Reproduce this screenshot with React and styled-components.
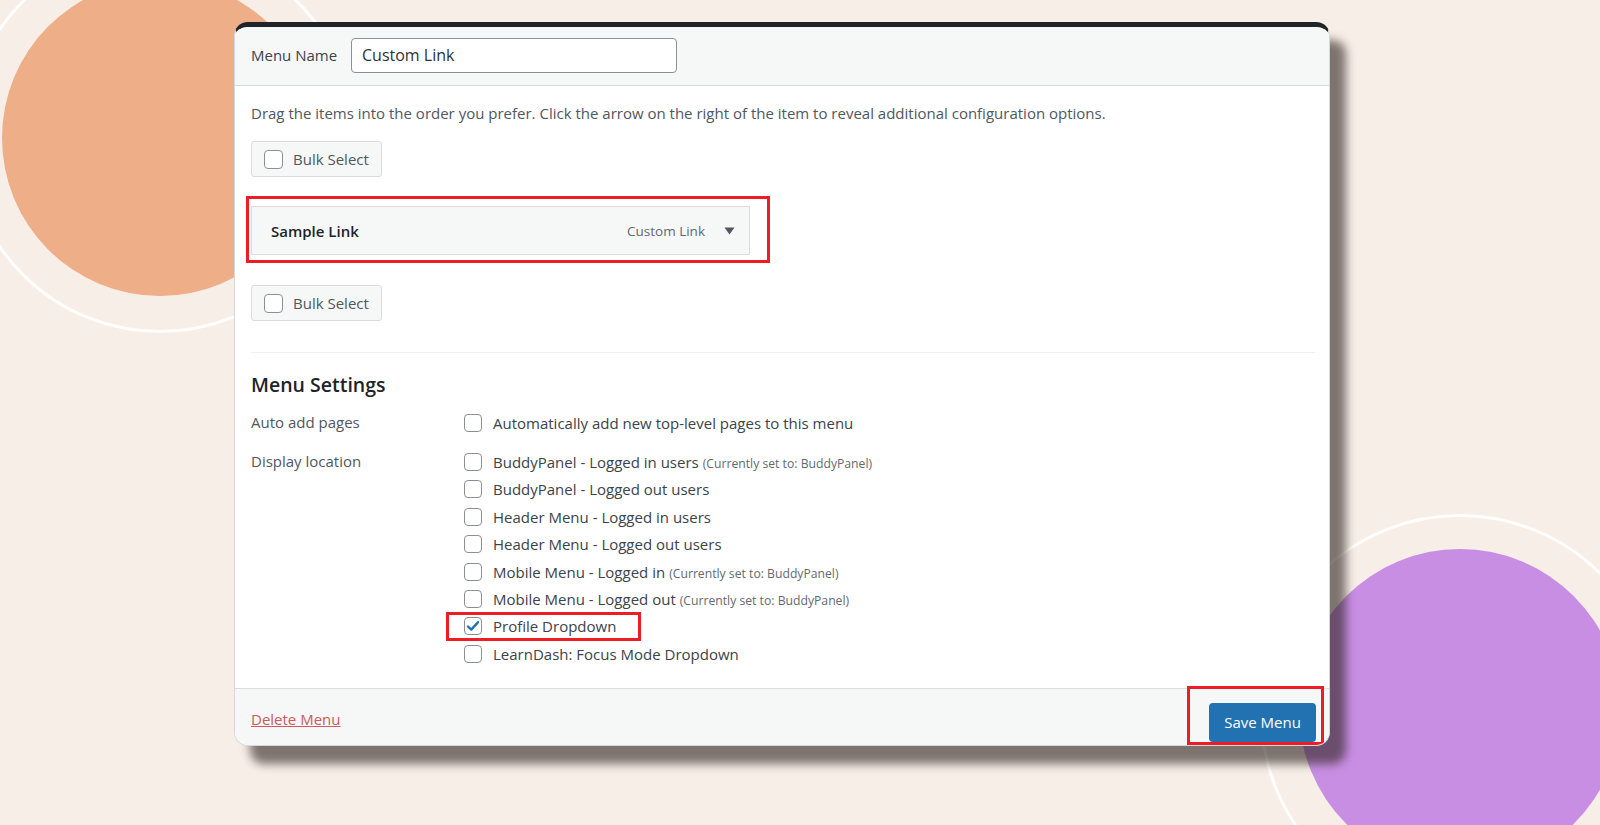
import React from 'react'
import styled, { createGlobalStyle } from 'styled-components'

const GlobalStyle = createGlobalStyle`
  html, body {
    margin: 0;
    padding: 0;
    background: #f7eee8;
  }
  body {
    font-family: "Open Sans", "Noto Sans", sans-serif;
  }
`

const Stage = styled.div`
  position: relative;
  width: 1600px;
  height: 825px;
  overflow: hidden;
  background: #f7eee8;
  padding: 22px 0 0 234px;
  box-sizing: border-box;
`

const Blob = styled.div`
  position: absolute;
  left: ${p => p.x - p.r}px;
  top: ${p => p.y - p.r}px;
  width: ${p => p.r * 2}px;
  height: ${p => p.r * 2}px;
  border-radius: 50%;
  background: ${p => p.color};
`

const Ring = styled.div`
  position: absolute;
  left: ${p => p.x - p.r}px;
  top: ${p => p.y - p.r}px;
  width: ${p => p.r * 2}px;
  height: ${p => p.r * 2}px;
  border-radius: 50%;
  border: 3px solid rgba(255, 255, 255, 0.9);
  box-sizing: border-box;
`

const Window = styled.div`
  position: relative;
  z-index: 1;
  width: 1096px;
  height: 724px;
  box-sizing: border-box;
  display: flex;
  flex-direction: column;
  background: #fff;
  border: 1.5px solid #d6d7d8;
  border-top: 5px solid #1f2428;
  border-radius: 14px;
  overflow: hidden;
  box-shadow: 16px 18px 10px rgba(45, 35, 30, 0.6);
`

const Header = styled.div`
  height: 59px;
  flex: none;
  box-sizing: border-box;
  display: flex;
  align-items: center;
  gap: 16px;
  padding: 0 16px 2px;
  background: #f6f7f7;
  border-bottom: 1px solid #dcdcde;
`

const Label = styled.span`
  flex: none;
  white-space: nowrap;
  font-size: 15px;
  color: #3c434a;
  width: 84px;
`

const NameInput = styled.div`
  width: 326px;
  height: 35px;
  box-sizing: border-box;
  display: flex;
  align-items: center;
  padding: 0 10px;
  background: #fff;
  border: 1px solid #8c8f94;
  border-radius: 4px;
  font-size: 16px;
  color: #2c3338;
`

const Body = styled.div`
  flex: 1;
  display: flex;
  flex-direction: column;
  padding: 16px 14px 0 16px;
`

const Description = styled.p`
  margin: 0;
  font-size: 15px;
  line-height: 22px;
  color: #50575e;
`

const BulkButton = styled.div`
  align-self: flex-start;
  display: flex;
  align-items: center;
  gap: 10px;
  height: 36px;
  box-sizing: border-box;
  padding: 0 12px;
  margin-top: ${p => p.top}px;
  background: #f6f7f7;
  border: 1px solid #dcdcde;
  border-radius: 3px;
  font-size: 15px;
  color: #50575e;
`

const Box = styled.span`
  width: ${p => p.size || 18}px;
  height: ${p => p.size || 18}px;
  box-sizing: border-box;
  flex: none;
  display: flex;
  align-items: center;
  justify-content: center;
  background: #fff;
  border: 1px solid #8c8f94;
  border-radius: 4px;
`

const Highlight = styled.div`
  position: absolute;
  left: ${p => p.l}px;
  top: ${p => p.t}px;
  right: ${p => p.r}px;
  bottom: ${p => p.b}px;
  border: 3px solid #ee1c25;
  pointer-events: none;
`

const ItemWrap = styled.div`
  position: relative;
  width: 499px;
  margin-top: 29px;
`

const MenuItem = styled.div`
  height: 49px;
  box-sizing: border-box;
  display: flex;
  align-items: center;
  padding: 0 14px 0 19px;
  background: #f6f7f7;
  border: 1px solid #dcdcde;
`

const ItemTitle = styled.span`
  flex: 1;
  font-size: 15px;
  font-weight: 600;
  color: #1d2327;
`

const ItemType = styled.span`
  font-size: 13.5px;
  color: #646970;
  margin-right: 19px;
`

const Divider = styled.div`
  height: 1px;
  background: #f0f0f1;
  margin-top: 31px;
`

const Heading = styled.h3`
  margin: 19px 0 0;
  font-size: 19.5px;
  line-height: 26px;
  font-weight: 600;
  color: #1d2327;
`

const SettingRow = styled.div`
  display: grid;
  grid-template-columns: 213px 1fr;
  margin-top: ${p => p.top}px;
`

const SettingLabel = styled.div`
  font-size: 15px;
  line-height: 27.4px;
  color: #50575e;
`

const OptionList = styled.div`
  display: flex;
  flex-direction: column;
`

const Option = styled.div`
  position: relative;
  align-self: flex-start;
  display: flex;
  align-items: center;
  gap: 11px;
  height: 27.4px;
  font-size: 15px;
  color: #3c434a;
`

const Note = styled.span`
  font-size: 12.2px;
  color: #646970;
  margin-left: 4px;
`

const Footer = styled.div`
  height: 57px;
  flex: none;
  box-sizing: border-box;
  display: flex;
  align-items: center;
  justify-content: space-between;
  padding: 0 13px 0 16px;
  background: #f6f7f7;
  border-top: 1px solid #dcdcde;
`

const DeleteLink = styled.a`
  font-size: 15px;
  color: #cc5a5e;
  text-decoration: underline;
  margin-top: 3px;
`

const SaveWrap = styled.div`
  position: relative;
  margin-top: 10px;
`

const SaveButton = styled.div`
  height: 39px;
  width: 107px;
  box-sizing: border-box;
  display: flex;
  align-items: center;
  justify-content: center;
  background: #2271b1;
  border-radius: 4px;
  font-size: 15px;
  color: #fff;
`

const Arrow = () => (
  <svg width="11" height="8" viewBox="0 0 11 8">
    <path d="M0.5 0.5 H10.5 L5.5 7.5 Z" fill="#50575e" />
  </svg>
)

const Check = () => (
  <svg width="14" height="12" viewBox="0 0 14 12">
    <path d="M2 6.5 L5.3 9.6 L12 2.2" fill="none" stroke="#2271b1" strokeWidth="2.4" strokeLinecap="round" strokeLinejoin="round" />
  </svg>
)

const locations = [
  { label: 'BuddyPanel - Logged in users', note: '(Currently set to: BuddyPanel)' },
  { label: 'BuddyPanel - Logged out users' },
  { label: 'Header Menu - Logged in users' },
  { label: 'Header Menu - Logged out users' },
  { label: 'Mobile Menu - Logged in', note: '(Currently set to: BuddyPanel)' },
  { label: 'Mobile Menu - Logged out', note: '(Currently set to: BuddyPanel)' },
  { label: 'Profile Dropdown', checked: true, marked: true },
  { label: 'LearnDash: Focus Mode Dropdown' }
]

export default function App () {
  return (
    <>
      <GlobalStyle />
      <Stage>
        <Blob x={160} y={138} r={158} color="#eeae88" />
        <Ring x={160} y={138} r={195} />
        <Blob x={1460} y={710} r={161} color="#c88ee3" />
        <Ring x={1460} y={714} r={200} />

        <Window>
          <Header>
            <Label>Menu Name</Label>
            <NameInput>Custom Link</NameInput>
          </Header>

          <Body>
            <Description>
              Drag the items into the order you prefer. Click the arrow on the right of the item to reveal additional configuration options.
            </Description>

            <BulkButton top={17}>
              <Box size={19} />
              Bulk Select
            </BulkButton>

            <ItemWrap>
              <MenuItem>
                <ItemTitle>Sample Link</ItemTitle>
                <ItemType>Custom Link</ItemType>
                <Arrow />
              </MenuItem>
              <Highlight l={-5} t={-10} r={-20} b={-8} />
            </ItemWrap>

            <BulkButton top={30}>
              <Box size={19} />
              Bulk Select
            </BulkButton>

            <Divider />

            <Heading>Menu Settings</Heading>

            <SettingRow top={11}>
              <SettingLabel>Auto add pages</SettingLabel>
              <OptionList>
                <Option>
                  <Box />
                  Automatically add new top-level pages to this menu
                </Option>
              </OptionList>
            </SettingRow>

            <SettingRow top={12}>
              <SettingLabel>Display location</SettingLabel>
              <OptionList>
                {locations.map(loc => (
                  <Option key={loc.label}>
                    <Box>{loc.checked && <Check />}</Box>
                    <span>
                      {loc.label}
                      {loc.note && <Note>{loc.note}</Note>}
                    </span>
                    {loc.marked && <Highlight l={-18} t={-1} r={-25} b={-1} />}
                  </Option>
                ))}
              </OptionList>
            </SettingRow>
          </Body>

          <Footer>
            <DeleteLink>Delete Menu</DeleteLink>
            <SaveWrap>
              <SaveButton>Save Menu</SaveButton>
              <Highlight l={-22} t={-17} r={-8} b={-3} />
            </SaveWrap>
          </Footer>
        </Window>
      </Stage>
    </>
  )
}
